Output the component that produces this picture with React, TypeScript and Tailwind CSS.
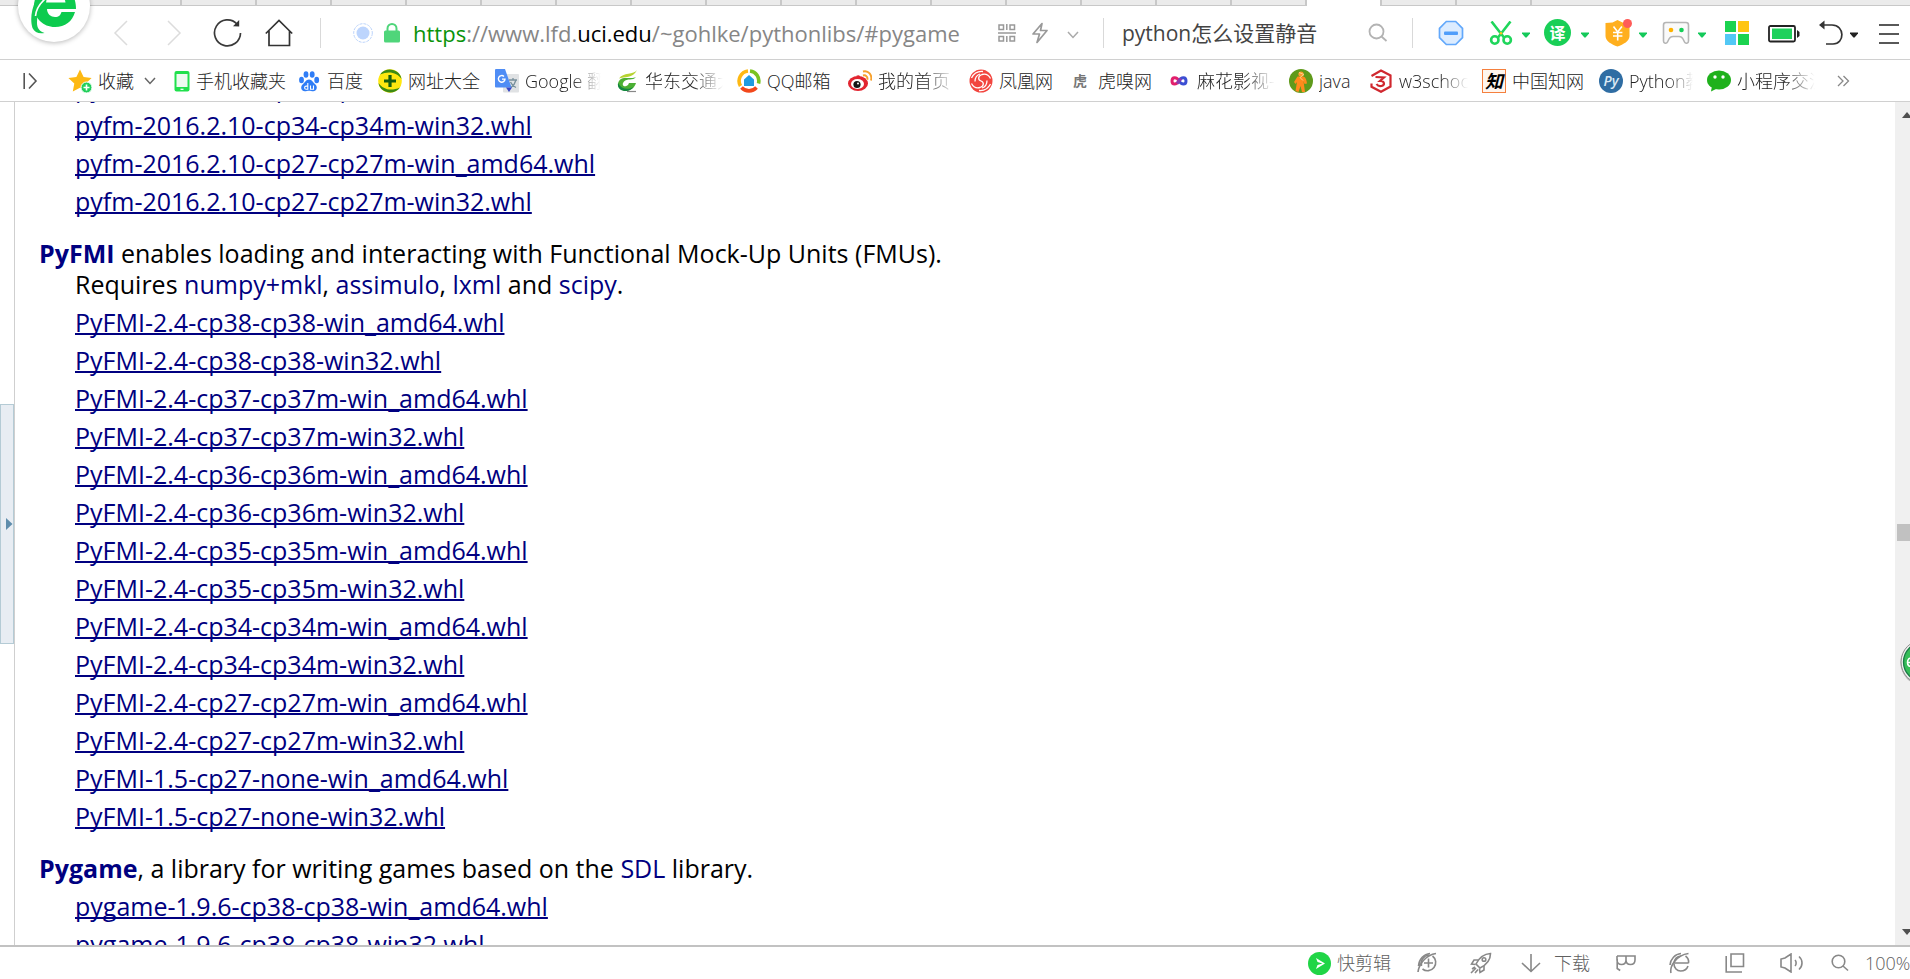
import React from "react";

const FONT = "font-['Open_Sans','Noto_Sans_CJK_SC',sans-serif]";
const CJK_LIGHT = "font-['Open_Sans','Noto_Sans_CJK_SC',sans-serif] font-light";

type IconProps = { w: number; h: number; box?: string; children: React.ReactNode };

function Icon({ w, h, box, children }: IconProps) {
  return (
    <svg
      width={w}
      height={h}
      viewBox={box ?? `0 0 ${w} ${h}`}
      fill="none"
      aria-hidden="true"
      className="block shrink-0"
    >
      {children}
    </svg>
  );
}

function Tool({ label, className, children }: { label: string; className: string; children: React.ReactNode }) {
  return (
    <button type="button" aria-label={label} className={`flex shrink-0 items-center justify-center ${className}`}>
      {children}
    </button>
  );
}

function Caret({ color }: { color: string }) {
  return (
    <Icon w={8} h={6}>
      <path d="M0 0.5h8v1L4.6 5.4H3.4L0 1.5z" fill={color} />
    </Icon>
  );
}

function Divider({ className }: { className: string }) {
  return <div className={`h-[30px] w-px shrink-0 bg-[#d9d9d9] ${className}`} />;
}

/* ---------- tab strip ---------- */

const TABS = Array.from({ length: 19 }, (_, i) => i);
const ACTIVE_TAB = 16;

function TabStrip() {
  return (
    <div className="flex h-[6px] shrink-0 bg-[#ebebeb]" role="tablist">
      <div className="w-[107px] shrink-0 border-b border-[#c8c8c8]" />
      {TABS.map((i) => (
        <div
          key={i}
          role="tab"
          aria-selected={i === ACTIVE_TAB}
          className={
            i === ACTIVE_TAB
              ? "w-[75px] shrink-0 border-r-2 border-[#c8c8c8] bg-white"
              : "w-[75px] shrink-0 border-r-2 border-b border-[#c8c8c8]"
          }
        />
      ))}
      <div className="flex-1 border-b border-[#c8c8c8]" />
    </div>
  );
}

/* ---------- address bar ---------- */

function BrowserLogo() {
  return (
    <div className="absolute -top-[30px] left-[18px] z-10 flex h-[72px] w-[72px] items-end justify-center rounded-full bg-white shadow-[0_1px_5px_rgba(0,0,0,0.28)]">
      <Icon w={72} h={72}>
        <path
          d="M58 39H29c0 5 4 8 8 8s5.500-2 6.500-5H57c-2.500 9.500-10 15-20 15-12 0-21-9-21-21s9-21 21-21 21 9 21 24z"
          fill="#0dcb4e"
        />
        <path d="M28 32.500h19.500C46.500 26 42 23 37.500 23S29 26 28 32.500z" fill="#fff" />
        <path d="M20 26c-7 12-8 24-5.500 32 2 4.500 6.500 6 12 5-5-1.500-7.500-5-7.500-10z" fill="#12c951" />
        <path d="M17.500 46c.5-6 4-12 9.500-17" stroke="#fff" strokeWidth="1.600" />
      </Icon>
    </div>
  );
}

function AddressBar() {
  return (
    <div className="flex h-[53px] shrink-0 items-center bg-white">
      <Tool label="后退" className="ml-[113px] w-[15px]">
        <Icon w={15} h={26}>
          <path d="M14 1L2 13l12 12" stroke="#dcdcdc" strokeWidth="1.500" />
        </Icon>
      </Tool>
      <Tool label="前进" className="ml-[39px] w-[15px]">
        <Icon w={15} h={26}>
          <path d="M1 1l12 12L1 25" stroke="#dcdcdc" strokeWidth="1.500" />
        </Icon>
      </Tool>
      <Tool label="刷新" className="ml-[30px] w-[30px]">
        <Icon w={30} h={30}>
          <path d="M28.500 15A13 13 0 1 1 25 6" stroke="#3a3a3a" strokeWidth="1.700" />
          <path d="M21 8.200l6.200.3V2z" fill="#333" />
        </Icon>
      </Tool>
      <Tool label="主页" className="ml-[23px] w-[28px]">
        <Icon w={28} h={28}>
          <path d="M.8 14.500L14 1.500l13.200 13M4 12v14.500h20.500V12" stroke="#333" strokeWidth="1.700" />
        </Icon>
      </Tool>
      <Divider className="ml-[27px]" />
      <div className="ml-[32px] shrink-0">
        <Icon w={20} h={20}>
          <circle cx="10" cy="10" r="9.300" stroke="#bcd4fb" strokeWidth="1" strokeDasharray="3 1" />
          <circle cx="10" cy="10" r="6.500" fill="#bdd5fd" />
        </Icon>
      </div>
      <div className="ml-[11px] shrink-0">
        <Icon w={16} h={20}>
          <path d="M3.500 9V5.500a4.500 4.500 0 0 1 9 0V9" stroke="#4fd57a" strokeWidth="2" />
          <rect y="7.500" width="16" height="12" rx="1.500" fill="#4fd57a" />
        </Icon>
      </div>
      <div
        role="textbox"
        aria-label="网址"
        contentEditable
        suppressContentEditableWarning
        spellCheck={false}
        className="ml-[13px] min-w-0 flex-1 overflow-hidden text-[22px] leading-[30px] whitespace-nowrap text-[#868686] outline-none"
      >
        <span className="text-[#0a930a]">https</span>://www.lfd.<span className="text-black">uci.edu</span>
        /~gohlke/pythonlibs/#pygame
      </div>
      <Tool label="二维码" className="w-[18px]">
        <Icon w={18} h={18}>
          <g stroke="#999" strokeWidth="1.500">
            <path d="M0 9h18" />
            <rect x="1" y="1" width="4.500" height="4.500" />
            <rect x="12" y="1" width="4.500" height="4.500" />
            <rect x="1" y="12.500" width="4.500" height="4.500" />
            <rect x="12" y="12.500" width="4.500" height="4.500" />
            <path d="M8.800 0v6M8.800 12v6" />
          </g>
        </Icon>
      </Tool>
      <Tool label="极速模式" className="ml-[15px] w-[18px]">
        <Icon w={18} h={22}>
          <path d="M11 1.500L2 12h6.500L6 20.500 16 8.500H9.500z" stroke="#999" strokeWidth="1.700" strokeLinejoin="round" />
        </Icon>
      </Tool>
      <Tool label="更多" className="ml-[18px] w-[12px] pt-1">
        <Icon w={12} h={8}>
          <path d="M1 1l5 5.500L11 1" stroke="#aaa" strokeWidth="1.500" />
        </Icon>
      </Tool>
      <Divider className="ml-[24px]" />
      <input
        aria-label="搜索"
        defaultValue="python怎么设置静音"
        className="ml-[18px] w-[230px] shrink-0 bg-transparent text-[21px] leading-[30px] text-[#444] outline-none"
      />
      <Tool label="搜索" className="ml-[16px] w-[20px]">
        <Icon w={20} h={20}>
          <circle cx="8.500" cy="8.500" r="7" stroke="#b3b3b3" strokeWidth="1.800" />
          <path d="M13.500 13.500l5 4.500" stroke="#b3b3b3" strokeWidth="1.800" />
        </Icon>
      </Tool>
      <Divider className="ml-[24px]" />
      <Tool label="广告拦截" className="ml-[25px] w-[26px]">
        <Icon w={26} h={26}>
          <path d="M8.300 1.500h9.400l6.800 6.800v9.400l-6.800 6.800H8.300l-6.800-6.800V8.300z" fill="#dcecff" stroke="#62a8fb" strokeWidth="1.700" />
          <rect x="6" y="11.500" width="14" height="3.500" rx="1" fill="#4f9dfa" />
        </Icon>
      </Tool>
      <Tool label="截图" className="ml-[25px] w-[24px]">
        <Icon w={24} h={24}>
          <path d="M2.500 .5L15 16.500M21.500 .5L9 16.500" stroke="#1fd65b" strokeWidth="2.600" />
          <circle cx="5.800" cy="19" r="3.700" stroke="#1fd65b" strokeWidth="2.600" />
          <circle cx="18.200" cy="19" r="3.700" stroke="#1fd65b" strokeWidth="2.600" />
          <circle cx="12" cy="12.300" r="1.300" fill="#ffc21a" />
        </Icon>
      </Tool>
      <Tool label="截图菜单" className="ml-[9px] w-[8px] pt-1"><Caret color="#14c95a" /></Tool>
      <Tool label="翻译" className="ml-[14px] w-[27px]">
        <span className="flex size-[27px] items-center justify-center rounded-full bg-[#19cf57] text-[16px] leading-none font-bold text-white">译</span>
      </Tool>
      <Tool label="翻译菜单" className="ml-[10px] w-[8px] pt-1"><Caret color="#14c95a" /></Tool>
      <Tool label="网购" className="ml-[15px] w-[28px]">
        <Icon w={28} h={28}>
          <path d="M13.500 1l5 2.500 7 .5v13c0 5-6 8.500-12 10.500C7.500 25.500 1.500 22 1.500 17V4l7-.5z" fill="#ffaf1e" />
          <path d="M9.500 7.500l4.200 5.500 4.200-5.500M13.700 13v8.500M9 13.500h9.400M9 17h9.400" stroke="#fff" strokeWidth="1.600" />
          <circle cx="23.500" cy="4.500" r="4.500" fill="#ff5c58" />
        </Icon>
      </Tool>
      <Tool label="网购菜单" className="ml-[7px] w-[8px] pt-1"><Caret color="#14c95a" /></Tool>
      <Tool label="游戏" className="ml-[15px] w-[28px]">
        <Icon w={28} h={24}>
          <path
            d="M4 1.500h20c1.500 0 2.500 1 2.500 2.500v16c0 2.500-3 3-4 1l-1.500-3c-1-2-2-2.500-4-2.500h-6c-2 0-3 .5-4 2.500L5.500 21c-1 2-4 1.500-4-1V4c0-1.500 1-2.500 2.500-2.500z"
            fill="#fafafa"
            stroke="#b5b5b5"
            strokeWidth="1.600"
          />
          <circle cx="9" cy="9" r="2.300" fill="#ffb300" />
          <circle cx="19.500" cy="9" r="2.300" fill="#14cf57" />
        </Icon>
      </Tool>
      <Tool label="游戏菜单" className="ml-[8px] w-[8px] pt-1"><Caret color="#14c95a" /></Tool>
      <Tool label="扩展" className="ml-[19px] w-[23px]">
        <span className="grid grid-cols-2 gap-[2px]">
          <i className="block size-[11px] bg-[#1bd34f]" />
          <i className="block size-[11px] bg-[#ffc511]" />
          <i className="block size-[11px] bg-[#52c8f5]" />
          <i className="block size-[11px] bg-[#1bd34f]" />
        </span>
      </Tool>
      <Tool label="电池" className="ml-[20px] w-[32px] pt-[2px]">
        <Icon w={32} h={18}>
          <rect x="1" y="1" width="26" height="15.500" rx="1.500" stroke="#222" strokeWidth="1.800" />
          <rect x="4" y="3.500" width="20" height="10.500" fill="#1fd15c" />
          <path d="M29 5l2.500 2v4L29 13z" fill="#222" />
        </Icon>
      </Tool>
      <Tool label="恢复" className="ml-[19px] w-[24px]">
        <Icon w={24} h={26}>
          <path d="M2 5h11c13 0 13 19 1 19H7" stroke="#333" strokeWidth="1.700" />
          <path d="M0 5l5.500-4.500v9z" fill="#333" />
        </Icon>
      </Tool>
      <Tool label="恢复菜单" className="ml-[7px] w-[8px] pt-1"><Caret color="#222" /></Tool>
      <Tool label="菜单" className="mr-[11px] ml-[21px] w-[20px] pt-[2px]">
        <Icon w={20} h={20}>
          <path d="M0 1h20M0 10h20M0 19h20" stroke="#222" strokeWidth="1.700" />
        </Icon>
      </Tool>
    </div>
  );
}

/* ---------- bookmarks ---------- */

const icons = {
  star: (
    <Icon w={24} h={24}>
      <path d="M12 .5l3.600 7.500 8 .9-5.900 5.600 1.500 8L12 18.700 4.800 22.500l1.500-8L.4 8.900l8-.9z" fill="#fdb913" />
      <circle cx="18.500" cy="18.500" r="5.500" fill="#22cf5b" stroke="#fff" strokeWidth="1" />
      <path d="M18.500 15.500v6M15.500 18.500h6" stroke="#fff" strokeWidth="1.600" />
    </Icon>
  ),
  phone: (
    <Icon w={16} h={24} box="4 0 16 24">
      <rect x="4.500" y="2" width="15" height="20.500" rx="2" fill="#20e04c" />
      <rect x="6.500" y="5" width="11" height="13" fill="#edfaf0" />
      <path d="M10.500 20.300h3" stroke="#fff" strokeWidth="1.200" />
    </Icon>
  ),
  baidu: (
    <Icon w={24} h={24}>
      <g fill="#2f7df6">
        <ellipse cx="4.500" cy="11" rx="2.400" ry="3.200" />
        <ellipse cx="9" cy="5.500" rx="2.400" ry="3.300" />
        <ellipse cx="15.200" cy="5.500" rx="2.400" ry="3.300" />
        <ellipse cx="19.700" cy="11" rx="2.400" ry="3.200" />
        <path d="M12 10.500c3 0 4 3 6.200 4.800 3 2.600 1.500 7-2 7-1.600 0-2.700-.5-4.200-.5s-2.600.5-4.200.5c-3.500 0-5-4.400-2-7C8 13.500 9 10.500 12 10.500z" />
      </g>
      <path d="M10.800 14v6.300H9.200a1.600 1.600 0 0 1 0-3.200h1.600M13.500 16.500v3.800h3v-3.800" stroke="#fff" strokeWidth="1.100" />
    </Icon>
  ),
  sites: (
    <Icon w={24} h={24}>
      <circle cx="12" cy="12" r="11.800" fill="#ffe70f" />
      <path d="M2 5.500C8-3 22 0 23.500 10 19 3.500 11 1.500 2 5.500z" fill="#3c8a14" />
      <path d="M22 18.500C16 27 2 24 .5 14 5 20.500 13 22.500 22 18.500z" fill="#3c8a14" />
      <path d="M12 6v12M6 12h12" stroke="#175e10" strokeWidth="3.200" />
    </Icon>
  ),
  google: (
    <Icon w={24} h={24}>
      <rect x="8" y="5" width="16" height="18.500" rx="1" fill="#e0e2e4" />
      <path d="M14 11h8M18 9v2M21 11c-1 4-3 6-5 7.500M15.500 13c1 2.500 3.500 4.500 5.500 5.500" stroke="#78909c" strokeWidth="1.300" />
      <path d="M1 0h9l6.500 18.500H1a1 1 0 0 1-1-1V1a1 1 0 0 1 1-1z" fill="#4f8df5" />
      <path d="M11 18.500h6L14 23z" fill="#3646c7" />
      <path d="M9 7.500a3.300 3.300 0 1 0 1 2.600H7" stroke="#fff" strokeWidth="1.400" />
    </Icon>
  ),
  ecjtu: (
    <Icon w={24} h={24}>
      <path d="M22 1C19 6 8 3 4 9.500 9 7.500 18 9.500 22 1z" fill="#b7d331" />
      <path d="M21 8c-3 4-9 1-12 4.500C6 16 9 19 13 16l1-2h7c-2 7-9 9.500-15 6.500C.5 17 3 9.500 9 9c4-.5 9 1 12-1z" fill="#4cb034" />
      <path d="M3 14c-1 6 4 8.500 9 8 3-.5 5-2 6-4-5 3.500-12 2-15-4z" fill="#12873f" />
      <path d="M12 22.500h9" stroke="#888" strokeWidth="1.200" />
    </Icon>
  ),
  qq: (
    <Icon w={24} h={24}>
      <path d="M3.500 17A10 10 0 0 1 11 2" stroke="#fdb813" strokeWidth="3.600" />
      <path d="M13 2a10 10 0 0 1 8.500 12.500" stroke="#7ac31f" strokeWidth="3.600" />
      <path d="M19.500 18.500a10 10 0 0 1-15 0" stroke="#f2481b" strokeWidth="3.600" />
      <path d="M12 6l5 4.500V17H7v-6.500z" fill="#1f9be0" />
    </Icon>
  ),
  weibo: (
    <Icon w={24} h={24}>
      <ellipse cx="10" cy="14.500" rx="10" ry="7.500" fill="#e22530" />
      <path d="M8 7c3-2 5 0 4 2.500 3-1.500 6-.5 5 2.500" fill="#e22530" />
      <ellipse cx="9.500" cy="15" rx="6.500" ry="5" fill="#fff" />
      <circle cx="9" cy="15.500" r="3.600" fill="#161616" />
      <circle cx="10" cy="14.500" r="1" fill="#fff" />
      <path d="M15 6.500c3-.8 5 1.500 4.300 4.300M15 2.500c5.500-1.500 9.500 3.500 8 9" stroke="#f7a12d" strokeWidth="1.900" />
    </Icon>
  ),
  phoenix: (
    <Icon w={24} h={24}>
      <circle cx="12" cy="12" r="11.500" fill="#f2463f" />
      <path
        d="M12 12c-3-1-3.500-5 1-6.500 4-1 7 1 8.500 4M12 12c3 1 3.500 5-1 6.500-4 1-7-1-8.500-4M2.500 9C5 4 9 2 14 2.500M21.500 15c-2.500 5-6.500 7-11.500 6.500M6 12.500c0-4 2-6.500 5-7.500M18 11.500c0 4-2 6.500-5 7.500"
        stroke="#fff"
        strokeWidth="1.300"
      />
    </Icon>
  ),
  tiger: <span className="w-6 text-center text-[14px] leading-6 font-bold text-[#777]">虎</span>,
  mahua: (
    <Icon w={24} h={24}>
      <path d="M12 12c-2.500-4.500-7-4-7 0s4.500 4 7 0" stroke="#e21f6c" strokeWidth="3" />
      <path d="M12 12c2.500-4.500 7-4 7 0s-4.500 4-7 0" stroke="#3b4fd3" strokeWidth="3" />
      <path d="M10 14.500L14 9.500" stroke="#8b3bb2" strokeWidth="3" />
    </Icon>
  ),
  java: (
    <Icon w={24} h={24}>
      <circle cx="12" cy="12" r="12" fill="#5f9a1b" />
      <circle cx="12" cy="5" r="2.600" fill="#ff9a2b" />
      <path d="M8.500 7.500h6c2.500 1 3 4 3.500 7l-2.500.5-1-3 1.500 11h-3l-1.500-6-2 6-3-1 1.500-9-1.500 2-1.500-2z" fill="#ff8a1c" />
      <path d="M10 3.500l5 2-4 3 3 3" stroke="#ffd08a" strokeWidth="1" />
    </Icon>
  ),
  w3: (
    <Icon w={24} h={24}>
      <path d="M2.500 7l9.500-5.500 9.500 5v11L12 22.800l-9.500-5v-3.300" stroke="#d0282f" strokeWidth="2.200" />
      <path d="M6.500 8l8.500.5-4 3.500c5 0 5 4 1.500 5-2.500.5-4-.5-5-2" stroke="#d0282f" strokeWidth="2.200" />
    </Icon>
  ),
  cnki: (
    <span className="flex size-6 items-center justify-center border border-[#f5803e] bg-[#fff6ee] text-[18px] leading-none font-bold text-black italic">
      知
    </span>
  ),
  python: (
    <span className="flex size-6 items-center justify-center rounded-full bg-[#2f6da3] text-[14px] leading-none font-semibold text-[#dbe9f5] italic">
      Py
    </span>
  ),
  wechat: (
    <Icon w={24} h={24}>
      <ellipse cx="12" cy="11" rx="12" ry="9.500" fill="#1fb11c" />
      <path d="M5 17l-1 5.500 6-3z" fill="#1fb11c" />
      <circle cx="8" cy="8" r="1.700" fill="#fff" />
      <circle cx="16" cy="8" r="1.700" fill="#fff" />
    </Icon>
  ),
};

const FADE = "[mask-image:linear-gradient(to_right,black_60%,transparent)]";

const BOOKMARKS: { icon: keyof typeof icons; name: string; width: string; fade?: boolean; menu?: boolean }[] = [
  { icon: "star", name: "收藏", width: "w-[106px]", menu: true },
  { icon: "phone", name: "手机收藏夹", width: "w-[123px]" },
  { icon: "baidu", name: "百度", width: "w-[81px]" },
  { icon: "sites", name: "网址大全", width: "w-[117px]" },
  { icon: "google", name: "Google 翻译", width: "w-[120px]", fade: true },
  { icon: "ecjtu", name: "华东交通大学", width: "w-[122px]", fade: true },
  { icon: "qq", name: "QQ邮箱", width: "w-[111px]" },
  { icon: "weibo", name: "我的首页 微博", width: "w-[121px]", fade: true },
  { icon: "phoenix", name: "凤凰网", width: "w-[99px]" },
  { icon: "tiger", name: "虎嗅网", width: "w-[99px]" },
  { icon: "mahua", name: "麻花影视-", width: "w-[122px]", fade: true },
  { icon: "java", name: "java", width: "w-[80px]" },
  { icon: "w3", name: "w3school", width: "w-[113px]", fade: true },
  { icon: "cnki", name: "中国知网", width: "w-[117px]" },
  { icon: "python", name: "Python教程", width: "w-[108px]", fade: true },
  { icon: "wechat", name: "小程序交流", width: "w-[122px]", fade: true },
];

function BookmarksBar() {
  return (
    <nav
      aria-label="书签"
      className={`flex h-[43px] shrink-0 items-center border-y border-[#d0d0d0] bg-white text-[18px] leading-6 text-[#222] ${CJK_LIGHT}`}
    >
      <Tool label="展开侧栏" className="ml-[23px] w-[15px]">
        <Icon w={15} h={18}>
          <path d="M1.200 1v16M6 1.500L13 9l-7 7.500" stroke="#555" strokeWidth="1.600" />
        </Icon>
      </Tool>
      <div className="ml-[30px] flex min-w-0 items-center">
        {BOOKMARKS.map((b) => (
          <a
            key={b.name}
            href="#"
            className={`flex shrink-0 items-center gap-[6px] ${b.menu ? "pr-[18px]" : b.fade ? "pr-[14px]" : "pr-[6px]"} ${b.width}`}
          >
            <span className="flex h-6 shrink-0 items-center justify-center">{icons[b.icon]}</span>
            <span className={`min-w-0 overflow-hidden whitespace-nowrap ${b.fade ? FADE : "grow"}`}>{b.name}</span>
            {b.menu && (
              <Icon w={12} h={8}>
                <path d="M1 1l5 5.500L11 1" stroke="#666" strokeWidth="1.500" />
              </Icon>
            )}
          </a>
        ))}
      </div>
      <Tool label="更多书签" className="ml-[8px] w-[13px]">
        <Icon w={13} h={12}>
          <path d="M1 1l5 5-5 5M6.500 1l5 5-5 5" stroke="#888" strokeWidth="1.300" />
        </Icon>
      </Tool>
    </nav>
  );
}

/* ---------- page ---------- */

const PYFM = [
  "pyfm-2016.2.10-cp34-cp34m-win_amd64.whl",
  "pyfm-2016.2.10-cp34-cp34m-win32.whl",
  "pyfm-2016.2.10-cp27-cp27m-win_amd64.whl",
  "pyfm-2016.2.10-cp27-cp27m-win32.whl",
];

const PYFMI = [
  "PyFMI-2.4-cp38-cp38-win_amd64.whl",
  "PyFMI-2.4-cp38-cp38-win32.whl",
  "PyFMI-2.4-cp37-cp37m-win_amd64.whl",
  "PyFMI-2.4-cp37-cp37m-win32.whl",
  "PyFMI-2.4-cp36-cp36m-win_amd64.whl",
  "PyFMI-2.4-cp36-cp36m-win32.whl",
  "PyFMI-2.4-cp35-cp35m-win_amd64.whl",
  "PyFMI-2.4-cp35-cp35m-win32.whl",
  "PyFMI-2.4-cp34-cp34m-win_amd64.whl",
  "PyFMI-2.4-cp34-cp34m-win32.whl",
  "PyFMI-2.4-cp27-cp27m-win_amd64.whl",
  "PyFMI-2.4-cp27-cp27m-win32.whl",
  "PyFMI-1.5-cp27-none-win_amd64.whl",
  "PyFMI-1.5-cp27-none-win32.whl",
];

const PYGAME = ["pygame-1.9.6-cp38-cp38-win_amd64.whl", "pygame-1.9.6-cp38-cp38-win32.whl"];

function Files({ names }: { names: string[] }) {
  return (
    <ul className="pl-9">
      {names.map((n) => (
        <li key={n} className="pt-[7px]">
          <a href="#" className="text-[#000080] underline decoration-2 underline-offset-1 [text-decoration-skip-ink:none]">
            {n}
          </a>
        </li>
      ))}
    </ul>
  );
}

function Ref({ children }: { children: React.ReactNode }) {
  return (
    <a href="#" className="text-[#000080]">
      {children}
    </a>
  );
}

function LibraryList() {
  return (
    <main className="min-w-0 flex-1 overflow-hidden border-l border-[#cfcfcf] pl-6 text-[25px] leading-[31px] text-black">
      <div className="-mt-[37px] flex flex-col gap-[21px]">
        <section>
          <Files names={PYFM} />
        </section>
        <section>
          <p>
            <strong className="text-[#000080]">PyFMI</strong> enables loading and interacting with Functional Mock-Up Units (FMUs).
          </p>
          <p className="pl-9">
            Requires <Ref>numpy+mkl</Ref>, <Ref>assimulo</Ref>, <Ref>lxml</Ref> and <Ref>scipy</Ref>.
          </p>
          <Files names={PYFMI} />
        </section>
        <section>
          <p>
            <strong className="text-[#000080]">Pygame</strong>, a library for writing games based on the <Ref>SDL</Ref> library.
          </p>
          <Files names={PYGAME} />
        </section>
      </div>
    </main>
  );
}

function Scrollbar() {
  return (
    <div className="flex w-[15px] shrink-0 flex-col items-end justify-between overflow-hidden bg-[#f0f0f0] py-[10px]">
      <Icon w={8} h={6}>
        <path d="M0 6l5-6 5 6z" fill="#505050" />
      </Icon>
      <div className="mt-[18px] h-[17px] w-[13px] bg-[#c1c1c1]" />
      <Icon w={8} h={6}>
        <path d="M0 0h10L5 6z" fill="#505050" />
      </Icon>
    </div>
  );
}

function Viewport() {
  return (
    <div className="relative flex min-h-0 flex-1 bg-white">
      <div className="flex w-[14px] shrink-0 items-center">
        <button
          type="button"
          aria-label="展开侧边栏"
          className="flex h-[240px] w-[14px] items-center justify-end border border-[#b4cbd5] bg-[#e8edf3]"
        >
          <Icon w={7} h={12}>
            <path d="M0 0l6.500 6L0 12z" fill="#5f8dac" />
          </Icon>
        </button>
      </div>
      <LibraryList />
      <Scrollbar />
      <div className="absolute top-[537px] right-0 h-[46px] w-[10px]">
        <Icon w={10} h={46}>
          <circle cx="23" cy="24" r="22.500" fill="#b5b5b5" />
          <circle cx="23" cy="23" r="22" fill="#efefef" stroke="#8d8d8d" strokeWidth="1" />
          <circle cx="23" cy="23" r="19.500" fill="#36bd58" stroke="#197a45" strokeWidth="1.300" />
          <path d="M12 19.500c-3-1-4.500 1-4.500 4s2 4.500 4.500 3.500v-3.500H8" stroke="#fff" strokeWidth="1.600" />
        </Icon>
      </div>
    </div>
  );
}

/* ---------- status bar ---------- */

function StatusBar() {
  const s = { stroke: "#888", strokeWidth: 1.6 };
  return (
    <footer
      className={`flex h-[34px] shrink-0 items-center justify-end overflow-hidden border-t-2 border-[#c2c2c2] bg-white text-[18px] leading-6 whitespace-nowrap text-[#606060] ${CJK_LIGHT}`}
    >
      <button type="button" className="flex shrink-0 items-center gap-[6px]">
        <Icon w={23} h={23}>
          <circle cx="11.500" cy="11.500" r="11.500" fill="#20d546" />
          <path d="M8 6l9 5.500L8 17l1.500-4 5-1.500-5-1.500z" fill="#fff" />
        </Icon>
        快剪辑
      </button>
      <Tool label="加速" className="ml-[26px] w-[22px]">
        <Icon w={22} h={22}>
          <g {...s}>
            <path d="M15.500 4a8 8 0 1 1-10 13M4.500 14A8.500 8.500 0 0 1 12 3" />
            <path d="M1 20C2 12 9 3 19 1.500M1.500 14C2 7 7 2 13 1.500M11.500 6.500v9M7 11h9" />
          </g>
        </Icon>
      </Tool>
      <Tool label="加速器" className="ml-[31px] w-[22px]">
        <Icon w={22} h={22}>
          <g {...s}>
            <path d="M6 12C9 6 13 2 20.500 1.500 20.500 9 16 13 10 16z" />
            <circle cx="14" cy="7.500" r="1.800" />
            <path d="M8 8H4l-2.500 4 4 .5M14 14v4l-4 2.500-.500-4M6 16l-5 5M5 15l-3 2M8 17.500L5 21" />
          </g>
        </Icon>
      </Tool>
      <button type="button" className="ml-[29px] flex shrink-0 items-center gap-[13px]">
        <Icon w={20} h={20}>
          <path d="M10 1v17.500M1 10l9 8.500 9-8.500" {...s} />
        </Icon>
        下载
      </button>
      <Tool label="标记" className="ml-[26px] w-[20px]">
        <Icon w={20} h={18}>
          <path d="M1 2h18v4c0 4-2 4.500-4.500 4.500S10 9 10 6V2M10 6c0 3-2 4.500-4.500 4.500S1 9 1 6V2M1.200 5v9.500l3 2" {...s} />
        </Icon>
      </Tool>
      <Tool label="内核模式" className="ml-[33px] w-[22px]">
        <Icon w={22} h={22}>
          <g {...s}>
            <path d="M5 11h14.500M19.500 11c.5-3-1-5.500-3-7M5 12c0 4 3 7 6.500 7s6.500-2 7.500-5M5 11c.5-4 3-6.500 7-7" />
            <path d="M2 21C.5 15 7 3 19.500 1.500M1 13C1.500 7 6 2 12 1.500" />
          </g>
        </Icon>
      </Tool>
      <Tool label="多窗口" className="ml-[34px] w-[20px]">
        <Icon w={20} h={20}>
          <path d="M6 1h12.500v12.500H6zM1.200 3v16H17" {...s} />
        </Icon>
      </Tool>
      <Tool label="静音" className="ml-[35px] w-[24px]">
        <Icon w={24} h={20}>
          <path d="M1 6v8l4 1 6 4V1L5 5zM15 7c1.500 1.500 1.500 4.500 0 6M19 3.500c4 3.500 4 9.500 0 13" {...s} />
        </Icon>
      </Tool>
      <Tool label="缩放" className="ml-[27px] w-[18px]">
        <Icon w={18} h={18}>
          <circle cx="7.500" cy="7.500" r="6.300" {...s} />
          <path d="M12 12l5 4.500" {...s} />
        </Icon>
      </Tool>
      <span className="ml-[16px] w-[45px] shrink-0 overflow-hidden">100%</span>
    </footer>
  );
}

export default function App() {
  return (
    <div className={`relative flex h-screen flex-col overflow-hidden bg-white ${FONT}`}>
      <BrowserLogo />
      <TabStrip />
      <AddressBar />
      <BookmarksBar />
      <Viewport />
      <StatusBar />
    </div>
  );
}
